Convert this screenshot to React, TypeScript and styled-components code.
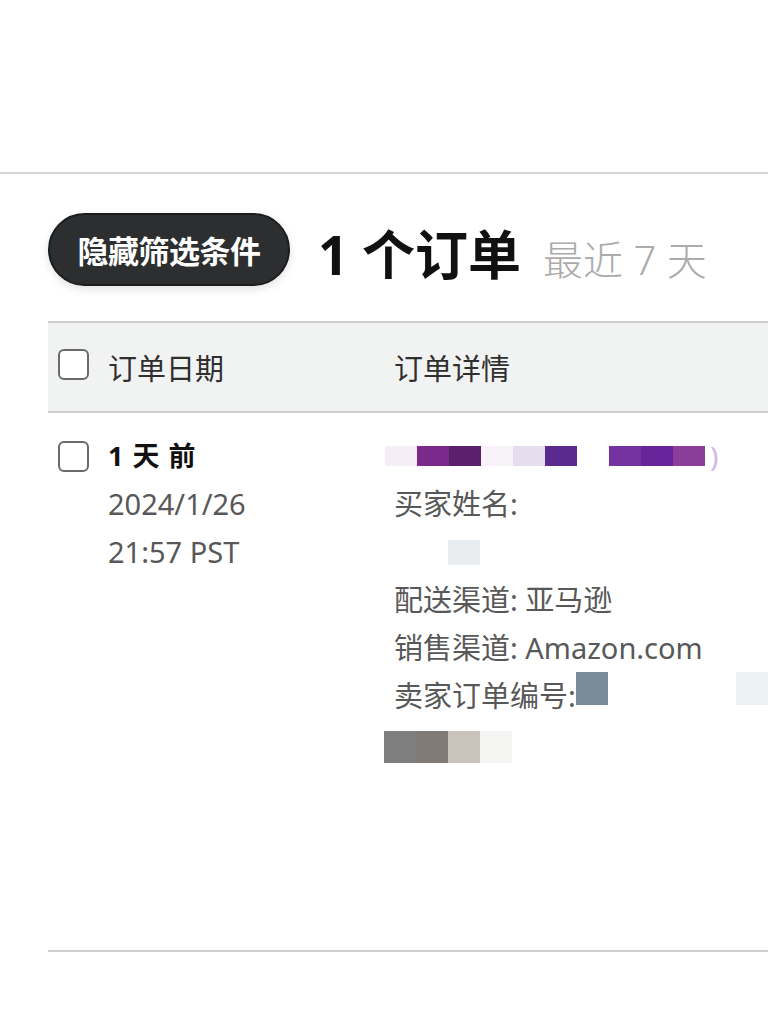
import React from 'react';
import styled, { createGlobalStyle } from 'styled-components';

const GlobalStyle = createGlobalStyle`
  body {
    margin: 0;
    background: #ffffff;
    font-family: "Noto Sans", "Noto Sans CJK SC", sans-serif;
    color: #333;
  }
`;

const TopBar = styled.div`
  height: 172px;
  border-bottom: 2px solid #d4d4d4;
`;

const Content = styled.div`
  padding-left: 48px;
`;

const Toolbar = styled.div`
  display: flex;
  align-items: center;
  margin-top: 39px;
  height: 73px;
`;

const FilterButton = styled.button`
  height: 73px;
  width: 242px;
  border-radius: 37px;
  border: 2px solid #1c1d1e;
  background-color: #2c2e2f;
  color: #ffffff;
  font-family: "Noto Sans CJK SC", sans-serif;
  font-size: 31px;
  font-weight: 700;
  letter-spacing: -0.5px;
  box-shadow: 0 3px 8px rgba(0, 0, 0, 0.12);
  cursor: pointer;
  padding: 0;
  display: flex;
  align-items: center;
  justify-content: center;
`;

const Title = styled.h1`
  margin: 0 0 0 28px;
  font-family: "Noto Sans", "Noto Sans CJK SC", sans-serif;
  font-size: 53px;
  font-weight: 700;
  color: #111;
  line-height: 1;
  position: relative;
  top: 5px;
`;

const Period = styled.span`
  margin-left: 22px;
  font-family: "Noto Sans", "Noto Sans CJK SC", sans-serif;
  font-size: 40px;
  font-weight: 300;
  color: #ababab;
  position: relative;
  top: 8px;
`;

const Table = styled.div`
  margin-top: 35px;
`;

const HeaderRow = styled.div`
  display: grid;
  grid-template-columns: 346px 1fr;
  align-items: center;
  height: 88px;
  background: #f1f2f2;
  border-top: 2px solid #cfcfcf;
  border-bottom: 2px solid #cfcfcf;
`;

const BodyRow = styled.div`
  display: grid;
  grid-template-columns: 346px 1fr;
  padding-top: 19px;
  height: 539px;
  box-sizing: border-box;
  border-bottom: 2px solid #cfcfcf;
`;

const DateCell = styled.div<{ $center?: boolean }>`
  display: flex;
  align-items: ${(p) => (p.$center ? 'center' : 'flex-start')};
  padding-left: 10px;
  gap: 19px;
`;

const CheckBox = styled.span<{ $offset?: number }>`
  flex: none;
  width: 27px;
  height: 27px;
  border: 2px solid #6a6a6a;
  border-radius: 6px;
  background: #fff;
  margin-top: ${(p) => p.$offset ?? 0}px;
`;

const HeadLabel = styled.span`
  font-size: 29px;
  color: #2f2f2f;
  font-family: "Noto Sans CJK SC", sans-serif;
`;

const Lines = styled.div`
  display: flex;
  flex-direction: column;
`;

const Line = styled.div<{ $strong?: boolean }>`
  font-size: ${(p) => (p.$strong ? 27 : 29)}px;
  line-height: 48px;
  height: 48px;
  white-space: nowrap;
  color: ${(p) => (p.$strong ? '#111' : '#585858')};
  font-weight: ${(p) => (p.$strong ? 700 : 400)};
  letter-spacing: ${(p) => (p.$strong ? '1px' : '0')};
  display: flex;
  align-items: center;
`;

const Mosaic = styled.span<{ $h: number; $shift?: number; $lift?: number }>`
  display: inline-flex;
  height: ${(p) => p.$h}px;
  margin-left: ${(p) => p.$shift ?? 0}px;
  margin-bottom: ${(p) => Math.max(p.$lift ?? 0, 0) * 2}px;
  margin-top: ${(p) => Math.max(-(p.$lift ?? 0), 0) * 2}px;
`;

const Tile = styled.span<{ $c: string; $w?: number }>`
  display: inline-block;
  width: ${(p) => p.$w ?? 32}px;
  height: 100%;
  background: ${(p) => p.$c};
`;

const Paren = styled.span`
  color: #cdb8e6;
  margin-left: 5px;
  font-size: 28px;
`;

const nameTiles = [
  '#f6eef6', '#7b2a8c', '#5c1f6e', '#f7f3f8', '#e6ddef', '#5b2a90',
  '#ffffff', '#7433a0', '#67249a', '#8a3e9a',
];

const refTiles = ['#7e7e7e', '#7f7a76', '#cbc4bd', '#f5f5f3'];

export default function App() {
  return (
    <>
      <GlobalStyle />
      <TopBar />
      <Content>
        <Toolbar>
          <FilterButton>隐藏筛选条件</FilterButton>
          <Title>1 个订单</Title>
          <Period>最近 7 天</Period>
        </Toolbar>
        <Table>
          <HeaderRow>
            <DateCell $center>
              <CheckBox $offset={-6} />
              <HeadLabel>订单日期</HeadLabel>
            </DateCell>
            <HeadLabel>订单详情</HeadLabel>
          </HeaderRow>
          <BodyRow>
            <DateCell>
              <CheckBox $offset={9} />
              <Lines>
                <Line $strong>1 天 前</Line>
                <Line>2024/1/26</Line>
                <Line>21:57 PST</Line>
              </Lines>
            </DateCell>
            <Lines>
              <Line>
                <Mosaic $h={20} $shift={-9}>
                  {nameTiles.map((c, i) => (
                    <Tile key={i} $c={c} />
                  ))}
                </Mosaic>
                <Paren>)</Paren>
              </Line>
              <Line>买家姓名:</Line>
              <Line>
                <Mosaic $h={25} $shift={54}>
                  <Tile $c="#e9edf0" />
                </Mosaic>
              </Line>
              <Line>配送渠道: 亚马逊</Line>
              <Line>销售渠道: Amazon.com</Line>
              <Line>
                卖家订单编号:
                <Mosaic $h={33} $lift={8}>
                  <Tile $c="#798a98" />
                </Mosaic>
                <Mosaic $h={33} $shift={128} $lift={8}>
                  <Tile $c="#edf2f3" />
                </Mosaic>
              </Line>
              <Line>
                <Mosaic $h={32} $shift={-10} $lift={-3}>
                  {refTiles.map((c, i) => (
                    <Tile key={i} $c={c} />
                  ))}
                </Mosaic>
              </Line>
            </Lines>
          </BodyRow>
        </Table>
      </Content>
    </>
  );
}
